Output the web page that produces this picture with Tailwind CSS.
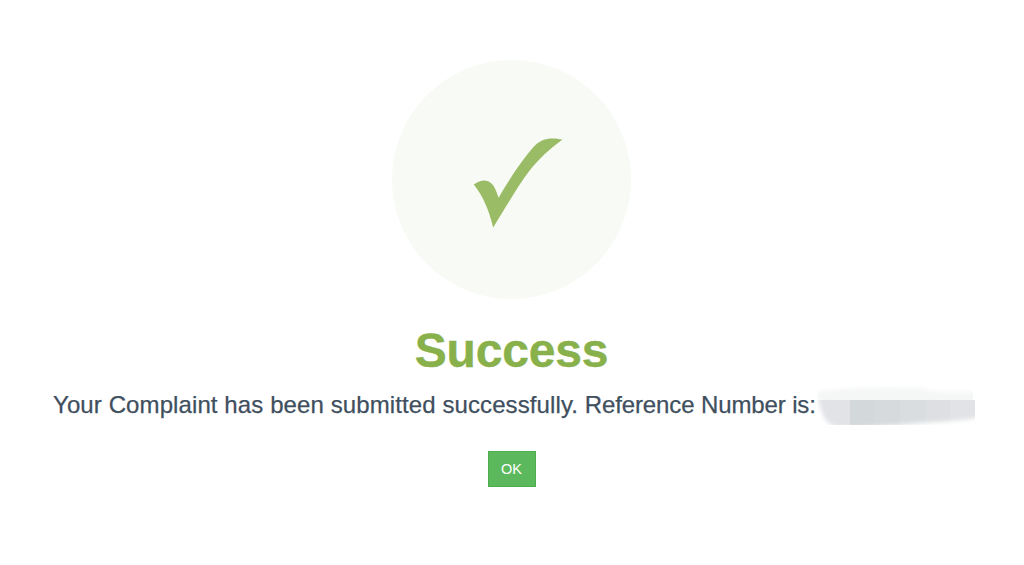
<!DOCTYPE html>
<html lang="en">
<head>
  <meta charset="UTF-8">
  <meta name="viewport" content="width=device-width, initial-scale=1.0">
  <title>Success</title>
  <script src="https://cdn.jsdelivr.net/npm/@tailwindcss/browser@4"></script>
</head>
<body class="bg-white min-h-screen overflow-hidden font-['Liberation_Sans',Arial,sans-serif]">
  <main class="flex flex-col items-center pt-[59.5px] pr-px">
    <!-- Success icon -->
    <div class="w-[239px] h-[239px] shrink-0 rounded-full bg-[#f8faf5]">
      <svg class="w-full h-full" viewBox="0 0 239 239" fill="#9abc66">
        <path d="M81.800 124.500C89 119.500 94.500 119.700 98.500 122.700C102 125.300 104 130 106.600 137.700C117.500 119 130 100 142 86.500C150 77.800 158.500 77.300 170.600 79.500C158 88.500 147 98.500 136.500 112C126 126 114.500 146 101.200 167.500C96.500 149 91 136 81.800 124.500Z"/>
      </svg>
    </div>

    <h1 class="mt-[24.5px] text-[48px] leading-[56px] font-bold tracking-[-0.2px] text-[#88b04b] [-webkit-text-stroke:0.4px_#88b04b]">Success</h1>

    <!-- Message with hidden reference number -->
    <div class="mt-[7px] flex h-[40px] w-full items-start pl-[53px]">
      <p class="w-[764px] whitespace-nowrap pt-[3px] text-[24px] leading-[32px] text-[#404f5e] [-webkit-text-stroke:0.25px_#404f5e]"><span class="tracking-[0.1px]">Your Complaint has been submitted successfully. </span><span class="tracking-[-0.12px]">Reference Number is:</span></p>
      <svg class="w-[160px] h-[40px] shrink-0" viewBox="0 0 160 40">
        <defs>
          <filter id="soft" x="-10%" y="-30%" width="120%" height="160%" color-interpolation-filters="sRGB"><feGaussianBlur stdDeviation="2"/></filter>
          <mask id="smudge">
            <path filter="url(#soft)" fill="#fff" d="M0 5C15 4 50 0 100 2L125 6H170V29C150 36 125 35 105 37C70 40 40 42 20 41C8 38 3 27 0 5Z"/>
          </mask>
        </defs>
        <g mask="url(#smudge)" shape-rendering="crispEdges">
          <path fill="#f5f6f6" d="M0 0H156V14H0Z"/>
          <path fill="#e2e3e7" d="M0 14H33V39H0Z"/>
          <path fill="#d3d8db" d="M33 14H58V39H33Z"/>
          <path fill="#d6dadd" d="M58 14H83V39H58Z"/>
          <path fill="#dadde0" d="M83 14H108V39H83Z"/>
          <path fill="#dedfe2" d="M108 14H133V39H108Z"/>
          <path fill="#e2e3e6" d="M133 14H158V39H133Z"/>
        </g>
      </svg>
    </div>

    <button type="button" class="mt-[25px] h-[36px] w-[48px] border border-[#4cae4c] bg-[#5cb85c] text-[14.5px] leading-none text-white">OK</button>
  </main>
</body>
</html>
